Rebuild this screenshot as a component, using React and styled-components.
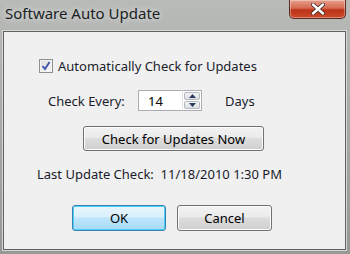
import React from "react";
import styled, { createGlobalStyle } from "styled-components";

const Global = createGlobalStyle`
  html, body { margin: 0; padding: 0; width: 350px; height: 254px; overflow: hidden; }
  body { font-family: "Noto Sans", "DejaVu Sans", sans-serif; }
`;

const Window = styled.div`
  width: 350px;
  height: 254px;
  display: flex;
  flex-direction: column;
  box-sizing: border-box;
  background: linear-gradient(180deg, #b9bbb9 0%, #a9aca9 40%, #959895 100%);
`;

const TitleBar = styled.div`
  height: 31px;
  flex: none;
  display: flex;
  align-items: flex-start;
  position: relative;
`;

const Title = styled.div`
  margin: 3px 0 0 5px;
  font-size: 15px;
  color: #1b1e24;
  text-shadow: 0 0 6px rgba(255,255,255,0.8);
`;

const Close = styled.div`
  position: absolute;
  right: 4px;
  top: 0;
  width: 57px;
  height: 19px;
  box-sizing: border-box;
  border: 1px solid #5c2a22;
  border-top: none;
  border-radius: 0 0 5px 5px;
  background: linear-gradient(180deg, #e6a08c 0%, #d66a52 45%, #bb3318 55%, #cd4a2c 100%);
  box-shadow: inset 0 0 0 1px rgba(255,255,255,0.35);
  display: flex;
  align-items: center;
  justify-content: center;
`;

const Client = styled.div`
  flex: 1;
  margin: 0 4px 4px 3px;
  border: 1px solid #5f625f;
  background: #f0f0f0;
  box-shadow: 0 0 0 1px #d5d8d5;
  display: flex;
  flex-direction: column;
  align-items: flex-start;
  color: #1a1c2c;
  font-size: 13px;
`;

const Row = styled.div`
  display: flex;
  align-items: center;
  margin-left: ${p => p.$left}px;
  margin-top: ${p => p.$top}px;
  height: ${p => p.$h || 20}px;
`;

const Check = styled.div`
  width: 14px;
  height: 14px;
  box-sizing: border-box;
  border: 1px solid #8e8f8f;
  background: linear-gradient(135deg, #dcdcdc, #f8f8f8);
  box-shadow: inset 0 0 0 1px #f4f4f4;
  display: flex;
  align-items: center;
  justify-content: center;
  margin-right: 5px;
`;

const Label = styled.span`
  white-space: nowrap;
  width: ${p => (p.$w ? `${p.$w}px` : "auto")};
  margin-left: ${p => p.$left || 0}px;
`;

const Input = styled.div`
  width: 44px;
  height: 21px;
  box-sizing: border-box;
  border: 1px solid #abadb3;
  border-right: none;
  background: #fff;
  display: flex;
  align-items: center;
  padding-left: 9px;
  color: #000;
`;

const Spin = styled.div`
  width: 20px;
  height: 21px;
  box-sizing: border-box;
  border: 1px solid #abadb3;
  border-left-color: #e3e3e3;
  background: #fff;
  display: flex;
  flex-direction: column;
  padding: 1px;
  gap: 1px;
`;

const SpinBtn = styled.div`
  flex: 1;
  border: 1px solid #b5b8bd;
  border-radius: 2px;
  background: linear-gradient(180deg, #f4f4f4, #dcdfe3);
  display: flex;
  align-items: center;
  justify-content: center;
`;

const Button = styled.div`
  width: ${p => p.$w}px;
  height: ${p => p.$h || 26}px;
  box-sizing: border-box;
  border: 1px solid ${p => (p.$focus ? "#3c7fb1" : "#707070")};
  border-radius: 3px;
  background: ${p =>
    p.$focus
      ? "linear-gradient(180deg, #eaf6fd 0%, #d9f0fc 45%, #bee6fd 50%, #a7d9f5 100%)"
      : "linear-gradient(180deg, #f2f2f2 0%, #ebebeb 45%, #dddddd 50%, #cfcfcf 100%)"};
  box-shadow: inset 0 0 0 1px ${p => (p.$focus ? "#48d0f9" : "#fcfcfc")};
  display: flex;
  align-items: center;
  justify-content: center;
  color: #000;
  margin-left: ${p => p.$left || 0}px;
`;

export default function App() {
  return (
    <>
      <Global />
      <Window>
        <TitleBar>
          <Title>Software Auto Update</Title>
          <Close>
            <svg width="14" height="12" viewBox="0 0 14 12">
              <path d="M2 1.5 L12 10.5 M12 1.5 L2 10.5" stroke="#3a2a2a" strokeWidth="4" strokeLinecap="round" />
              <path d="M2 1.5 L12 10.5 M12 1.5 L2 10.5" stroke="#ffffff" strokeWidth="2.4" strokeLinecap="round" />
            </svg>
          </Close>
        </TitleBar>
        <Client>
          <Row $left={35} $top={24}>
            <Check>
              <svg width="12" height="12" viewBox="0 0 12 12">
                <path d="M2.5 6 L5 9 L9.5 2" fill="none" stroke="#3a4fa8" strokeWidth="1.8" />
              </svg>
            </Check>
            <Label>Automatically Check for Updates</Label>
          </Row>
          <Row $left={44} $top={14} $h={21}>
            <Label $w={90}>Check Every:</Label>
            <Input>14</Input>
            <Spin>
              <SpinBtn>
                <svg width="7" height="4" viewBox="0 0 7 4"><path d="M0 4 L3.5 0 L7 4Z" fill="#2c3a60" /></svg>
              </SpinBtn>
              <SpinBtn>
                <svg width="7" height="4" viewBox="0 0 7 4"><path d="M0 0 L3.5 4 L7 0Z" fill="#2c3a60" /></svg>
              </SpinBtn>
            </Spin>
            <Label $left={23}>Days</Label>
          </Row>
          <Row $left={79} $top={15} $h={25}>
            <Button $w={181} $h={25}>Check for Updates Now</Button>
          </Row>
          <Row $left={33} $top={13}>
            <Label>Last Update Check:&nbsp; 11/18/2010 1:30 PM</Label>
          </Row>
          <Row $left={68} $top={21} $h={26}>
            <Button $w={94} $focus>OK</Button>
            <Button $w={95} $left={11}>Cancel</Button>
          </Row>
        </Client>
      </Window>
    </>
  );
}
